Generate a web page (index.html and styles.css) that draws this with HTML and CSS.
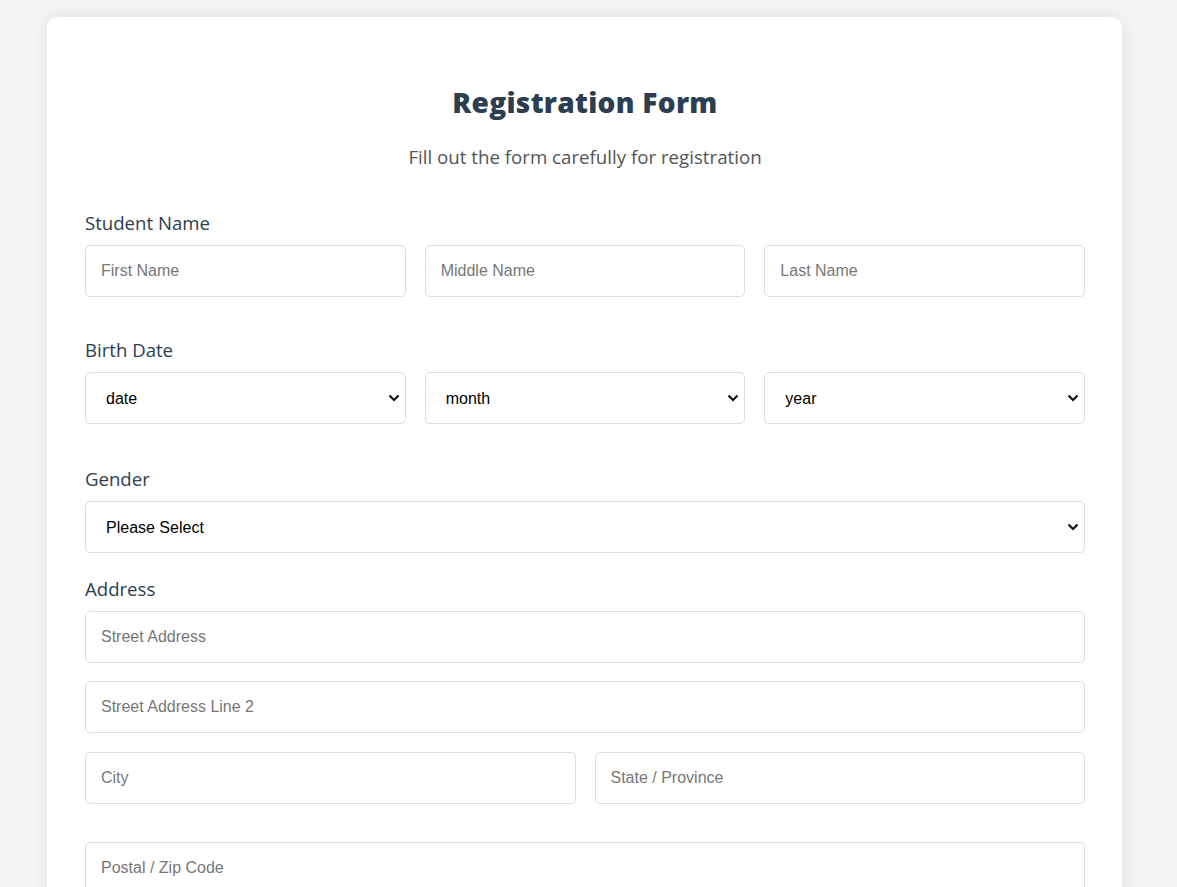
FILE: index.html
```html
<!DOCTYPE html>
<html lang="en">
<head>
<meta charset="utf-8">
<title>Registration Form</title>
<link rel="stylesheet" href="styles.css">
</head>
<body>
<div class="card">
  <h1 class="title">Registration Form</h1>
  <p class="subtitle">Fill out the form carefully for registration</p>

  <div class="group">
    <label class="label">Student Name</label>
    <div class="row three">
      <input class="field" type="text" placeholder="First Name">
      <input class="field" type="text" placeholder="Middle Name">
      <input class="field" type="text" placeholder="Last Name">
    </div>
  </div>

  <div class="group">
    <label class="label">Birth Date</label>
    <div class="row three">
      <div class="select-wrap">
        <select class="field select"><option>date</option></select>
        <svg class="chev" width="12" height="8" viewBox="0 0 12 8"><path d="M1.5 1.5 L6 6 L10.5 1.5" fill="none" stroke="#111" stroke-width="2.2"/></svg>
      </div>
      <div class="select-wrap">
        <select class="field select"><option>month</option></select>
        <svg class="chev" width="12" height="8" viewBox="0 0 12 8"><path d="M1.5 1.5 L6 6 L10.5 1.5" fill="none" stroke="#111" stroke-width="2.2"/></svg>
      </div>
      <div class="select-wrap">
        <select class="field select"><option>year</option></select>
        <svg class="chev" width="12" height="8" viewBox="0 0 12 8"><path d="M1.5 1.5 L6 6 L10.5 1.5" fill="none" stroke="#111" stroke-width="2.2"/></svg>
      </div>
    </div>
  </div>

  <div class="group group-tight">
    <label class="label">Gender</label>
    <div class="select-wrap">
      <select class="field select"><option>Please Select</option></select>
      <svg class="chev" width="12" height="8" viewBox="0 0 12 8"><path d="M1.5 1.5 L6 6 L10.5 1.5" fill="none" stroke="#111" stroke-width="2.2"/></svg>
    </div>
  </div>

  <div class="group">
    <label class="label">Address</label>
    <div class="stack">
      <input class="field" type="text" placeholder="Street Address">
      <input class="field" type="text" placeholder="Street Address Line 2">
      <div class="row two city-row">
        <input class="field" type="text" placeholder="City">
        <input class="field" type="text" placeholder="State / Province">
      </div>
    </div>
  </div>

  <div class="group postal">
    <input class="field" type="text" placeholder="Postal / Zip Code">
  </div>
</div>
</body>
</html>
```

FILE: styles.css
```css
html, body {
  margin: 0;
  padding: 0;
}
body {
  background: #f4f4f4;
  font-family: "Open Sans", "Noto Sans", sans-serif;
  color: #2c3e50;
}
.card {
  box-sizing: border-box;
  width: 1075px;
  margin: 17px 0 0 47px;
  padding: 68px 37px 40px 38px;
  background: #ffffff;
  border-radius: 10px;
  box-shadow: 0 0 20px rgba(0, 0, 0, 0.08);
}
.title {
  margin: 0;
  text-align: center;
  font-family: "Open Sans", sans-serif;
  font-weight: 800;
  font-size: 28px;
  line-height: 34px;
  color: #2c3e50;
  letter-spacing: 0.3px;
}
.subtitle {
  margin: 25px 0 0;
  text-align: center;
  font-size: 18.7px;
  line-height: 26px;
  color: #555;
}
.group {
  margin-top: 40px;
}
.group-tight {
  margin-top: 42px;
}
.group-tight + .group {
  margin-top: 23px;
}
.postal {
  margin-top: 38px;
}
.label {
  display: block;
  font-size: 18.6px;
  line-height: 26px;
  color: #2c3e50;
  margin-bottom: 9px;
}
.row {
  display: grid;
  column-gap: 19px;
}
.three {
  grid-template-columns: 1fr 1fr 1fr;
}
.two {
  grid-template-columns: 1fr 1fr;
}
.stack {
  display: flex;
  flex-direction: column;
  gap: 18px;
}
.city-row {
  margin-top: 1px;
}
.field {
  box-sizing: border-box;
  width: 100%;
  height: 52px;
  padding: 0 15px;
  border: 1px solid #dddddd;
  border-radius: 5px;
  background: #fff;
  font-family: "Liberation Sans", Arial, sans-serif;
  font-size: 16px;
  color: #111;
  outline: none;
}
.field::placeholder {
  color: #777;
}
.select-wrap {
  position: relative;
}
.select {
  appearance: none;
  -webkit-appearance: none;
  padding-left: 20px;
  color: #000;
}
.chev {
  position: absolute;
  right: 6px;
  top: 22px;
  pointer-events: none;
}
```
